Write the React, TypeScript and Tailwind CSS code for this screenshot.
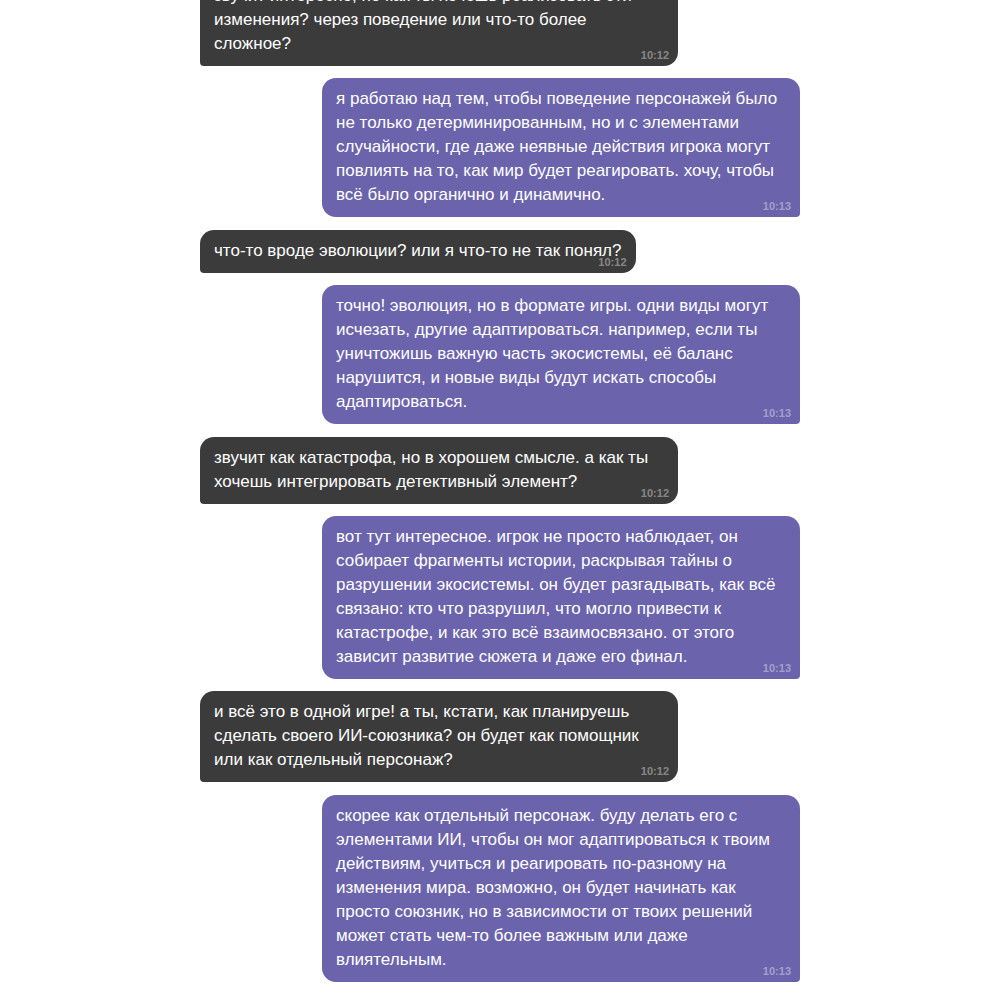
import React from "react";

type Msg = { me: boolean; text: string; time: string };

const msgs: Msg[] = [
  { me: false, text: "звучит интересно, но как ты хочешь реализовать эти изменения? через поведение или что-то более сложное?", time: "10:12" },
  { me: true, text: "я работаю над тем, чтобы поведение персонажей было не только детерминированным, но и с элементами случайности, где даже неявные действия игрока могут повлиять на то, как мир будет реагировать. хочу, чтобы всё было органично и динамично.", time: "10:13" },
  { me: false, text: "что-то вроде эволюции? или я что-то не так понял?", time: "10:12" },
  { me: true, text: "точно! эволюция, но в формате игры. одни виды могут исчезать, другие адаптироваться. например, если ты уничтожишь важную часть экосистемы, её баланс нарушится, и новые виды будут искать способы адаптироваться.", time: "10:13" },
  { me: false, text: "звучит как катастрофа, но в хорошем смысле. а как ты хочешь интегрировать детективный элемент?", time: "10:12" },
  { me: true, text: "вот тут интересное. игрок не просто наблюдает, он собирает фрагменты истории, раскрывая тайны о разрушении экосистемы. он будет разгадывать, как всё связано: кто что разрушил, что могло привести к катастрофе, и как это всё взаимосвязано. от этого зависит развитие сюжета и даже его финал.", time: "10:13" },
  { me: false, text: "и всё это в одной игре! а ты, кстати, как планируешь сделать своего ИИ-союзника? он будет как помощник или как отдельный персонаж?", time: "10:12" },
  { me: true, text: "скорее как отдельный персонаж. буду делать его с элементами ИИ, чтобы он мог адаптироваться к твоим действиям, учиться и реагировать по-разному на изменения мира. возможно, он будет начинать как просто союзник, но в зависимости от твоих решений может стать чем-то более важным или даже влиятельным.", time: "10:13" },
];

export default function App() {
  return (
    <div className="min-h-[1000px] w-full bg-white overflow-hidden" style={{ fontFamily: '"Liberation Sans", Arial, sans-serif' }}>
      <div className="w-[600px] mx-auto flex flex-col gap-[12.4px] mt-[-25px]">
        {msgs.map((m, i) => (
          <div key={i} className={m.me ? "flex justify-end" : "flex justify-start"}>
            <div
              className={
                m.me
                  ? "relative max-w-[478px] bg-[#6b63ab] text-white text-[17px] leading-[24px] px-[14px] pt-[9px] pb-[10px] rounded-[14px] rounded-br-[4px]"
                  : "relative max-w-[478px] bg-[#3b3b3b] text-white text-[17px] leading-[24px] px-[14px] pt-[9px] pb-[10px] rounded-[14px] rounded-bl-[4px]"
              }
            >
              {m.text}
              <span className="absolute right-[9px] bottom-[5px] text-[11px] leading-[12px] font-bold text-white/40">{m.time}</span>
            </div>
          </div>
        ))}
      </div>
    </div>
  );
}
